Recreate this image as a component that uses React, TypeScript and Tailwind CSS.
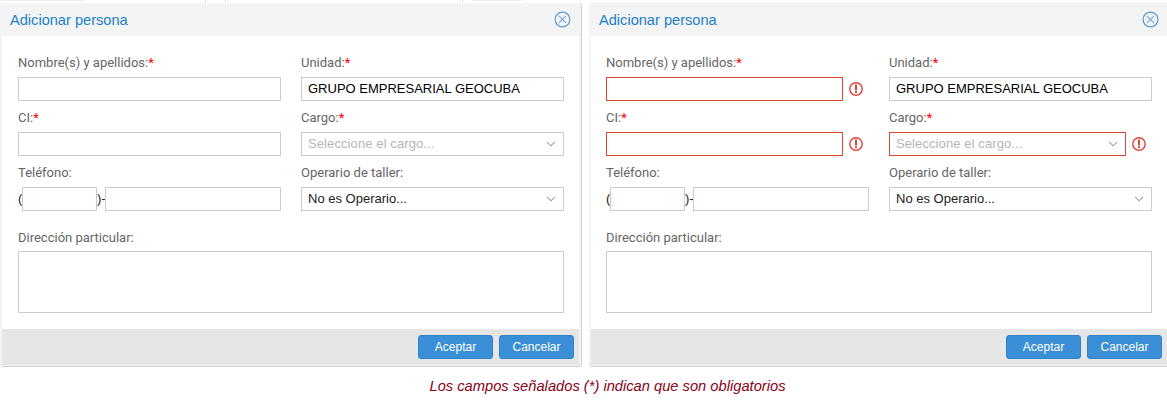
import React from "react";

const Alert = () => (
  <span className="w-[26px] shrink-0 flex justify-center">
    <svg width="16" height="16" viewBox="0 0 16 16" aria-hidden="true">
      <circle cx="8" cy="8" r="6.2" fill="none" stroke="#d9453a" strokeWidth="1.4" />
      <path d="M8 4.2v4.6" stroke="#d9453a" strokeWidth="2" strokeLinecap="round" />
      <circle cx="8" cy="11.2" r="1.1" fill="#d9453a" />
    </svg>
  </span>
);

const Chevron = () => (
  <svg width="10" height="6" viewBox="0 0 10 6" className="shrink-0" aria-hidden="true">
    <path d="M1 .8 5 4.8 9 .8" fill="none" stroke="#a0a0a0" strokeWidth="1.1" />
  </svg>
);

const Close = () => (
  <svg width="17" height="17" viewBox="0 0 17 17" aria-hidden="true">
    <circle cx="8.5" cy="8.5" r="7.4" fill="none" stroke="#5a9bd4" strokeWidth="1.2" />
    <path d="M5 5l7 7M12 5l-7 7" stroke="#7fb0dc" strokeWidth="1.1" />
  </svg>
);

const Label = ({ text, req }: { text: string; req?: boolean }) => (
  <div className="h-5 leading-[22px] text-[13px] text-[#666666] whitespace-nowrap">
    {text}
    {req && <span className="text-[#ff0000]">*</span>}
  </div>
);

const Box = ({ error, children, className = "" }: { error?: boolean; children?: React.ReactNode; className?: string }) => (
  <div
    className={`h-6 bg-white border flex items-center px-[6px] font-['Liberation_Sans',sans-serif] text-[13px] ${
      error ? "border-[#d9492f]" : "border-[#cccccc]"
    } ${className}`}
  >
    {children}
  </div>
);

const Select = ({ text, placeholder, error }: { text: string; placeholder?: boolean; error?: boolean }) => (
  <div className="flex items-center mt-[5px]">
    <Box error={error} className="flex-1 justify-between pr-[7px]">
      <span className={placeholder ? "text-[#b5b5b5] tracking-[0.1px]" : "text-[#222222]"}>{text}</span>
      <Chevron />
    </Box>
    {error && <Alert />}
  </div>
);

const Field = ({ error }: { error?: boolean }) => (
  <div className="flex items-center mt-[5px]">
    <Box error={error} className="flex-1" />
    {error && <Alert />}
  </div>
);

const Dialog = ({
  errors,
  className,
  headClass,
  bodyClass,
  footClass,
}: {
  errors?: boolean;
  className: string;
  headClass: string;
  bodyClass: string;
  footClass: string;
}) => (
  <div className={`flex flex-col bg-[#f4f4f4] font-['Roboto',sans-serif] border-b border-[#cfcfcf] ${className}`}>
    <div className={`shrink-0 flex items-center justify-between pl-2 pr-2 ${headClass}`}>
      <span className="font-['Liberation_Sans',sans-serif] text-[14.6px] text-[#1a80c8]">Adicionar persona</span>
      <span className="-mt-[3px] flex">
        <Close />
      </span>
    </div>
    <div className={`h-[293px] shrink-0 bg-white pt-4 ${bodyClass}`}>
      <div className="grid gap-x-5 gap-y-[6px] grid-cols-[263px_263px]">
        <div>
          <Label text="Nombre(s) y apellidos:" req />
          <Field error={errors} />
        </div>
        <div>
          <Label text="Unidad:" req />
          <div className="mt-[5px]">
            <Box>
              <span className="text-[#000000]">GRUPO EMPRESARIAL GEOCUBA</span>
            </Box>
          </div>
        </div>
        <div>
          <Label text="CI:" req />
          <Field error={errors} />
        </div>
        <div>
          <Label text="Cargo:" req />
          <Select text="Seleccione el cargo..." placeholder error={errors} />
        </div>
        <div>
          <Label text="Teléfono:" />
          <div className="flex items-center mt-[5px] text-[13px] text-[#222222] font-['Liberation_Sans',sans-serif]">
            <span className="w-1">(</span>
            <Box className="w-[75px]" />
            <span className="w-2 whitespace-nowrap">)-</span>
            <Box className="flex-1" />
          </div>
        </div>
        <div>
          <Label text="Operario de taller:" />
          <Select text="No es Operario..." />
        </div>
      </div>
      <div className="mt-4">
        <Label text="Dirección particular:" />
        <div className="mt-1 h-[62px] w-[546px] border border-[#cccccc] bg-white" />
      </div>
    </div>
    <div className={`h-9 shrink-0 bg-[#e6e6e6] flex items-center justify-end gap-[6px] font-['Liberation_Sans',sans-serif] ${footClass}`}>
      {["Aceptar", "Cancelar"].map((t) => (
        <div
          key={t}
          className="w-[75px] h-6 rounded-[3px] bg-[#3a8fd6] border border-[#2f83ca] text-white text-[12px] flex items-center justify-center"
        >
          {t}
        </div>
      ))}
    </div>
    <div className="h-px bg-[#f4f4f4]" />
  </div>
);

export default function App() {
  return (
    <div className="relative w-[1167px] h-[413px] bg-white overflow-hidden">
      <div className="absolute top-0 left-0 w-[582px] h-[3px] overflow-hidden">
        <span className="absolute left-0 top-0 w-[85px] h-px bg-[#f0f0f0]" />
        <span className="absolute left-[472px] top-0 w-[50px] h-px bg-[#f0f0f0]" />
        <span className="absolute left-[205px] top-0 w-px h-[3px] bg-[#e4e4e4]" />
        <span className="absolute left-[225px] top-0 w-px h-[3px] bg-[#e4e4e4]" />
        <span className="absolute left-[462px] top-0 w-px h-[3px] bg-[#e4e4e4]" />
      </div>
      <div className="relative flex items-start">
        <Dialog
          className="mt-[3px] w-[582px] px-[2px] border-r rounded-[4px]"
          headClass="h-[33px] pt-[3px]"
          bodyClass="pl-4"
          footClass="pr-[5px]"
        />
        <Dialog
          errors
          className="mt-[2px] ml-[7px] w-[578px] pl-[2px] rounded-tl-[2px] rounded-bl-[4px]"
          headClass="h-[34px] pt-[4px]"
          bodyClass="pl-[15px]"
          footClass="pr-[5px]"
        />
      </div>
      <p className="mt-[9px] pl-[48px] text-center font-['Liberation_Sans',sans-serif] italic text-[14.7px] leading-5 text-[#8a0016]">
        Los campos señalados (*) indican que son obligatorios
      </p>
    </div>
  );
}
